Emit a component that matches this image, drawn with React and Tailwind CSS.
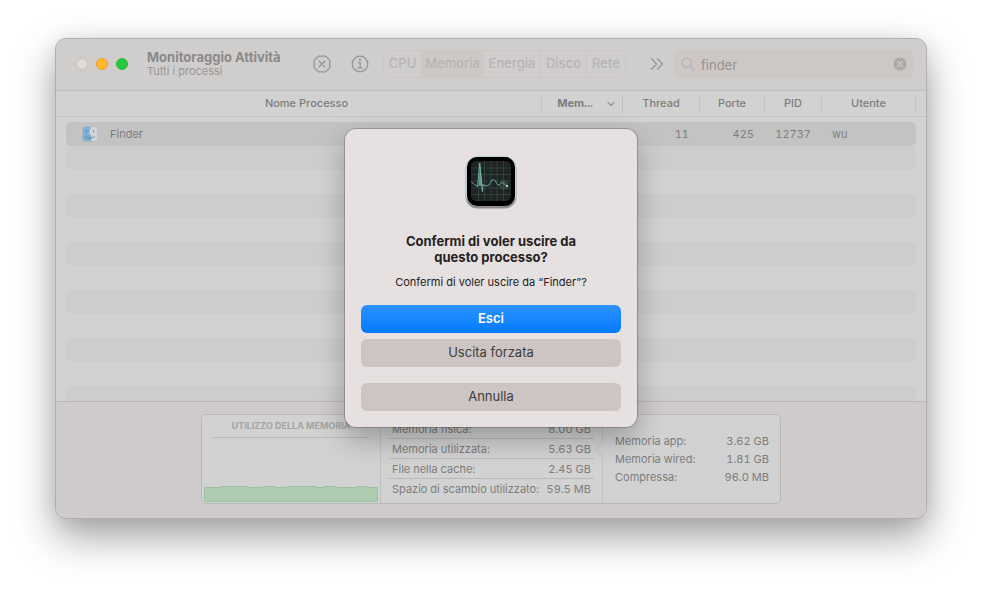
import React from "react";

const tabs = ["CPU", "Memoria", "Energia", "Disco", "Rete"];

const tabStyles = {
  CPU: "w-[37px]",
  Memoria: "w-[63px] rounded-md bg-[#cdc8c5]",
  Energia: "w-[57px] border-r border-[#c9c6c5]",
  Disco: "w-[46px] border-r border-[#c9c6c5]",
  Rete: "w-[38px]",
};

const usage = [
  { label: "Memoria fisica:", value: "8.00 GB" },
  { label: "Memoria utilizzata:", value: "5.63 GB" },
  { label: "File nella cache:", value: "2.45 GB" },
  { label: "Spazio di scambio utilizzato:", value: "59.5 MB" },
];

const breakdown = [
  { label: "Memoria app:", value: "3.62 GB" },
  { label: "Memoria wired:", value: "1.81 GB" },
  { label: "Compressa:", value: "96.0 MB" },
];

const emptyRows = Array.from({ length: 11 }, (_, i) => i);

export default function App() {
  return (
    <div className="min-h-screen bg-white px-[55px] pt-[38px] pb-[74px] font-['Inter','Liberation_Sans',sans-serif]">
      <main className="relative overflow-hidden rounded-[11px] border border-[#b0aeae] bg-[#d2d2d2] shadow-[0_18px_40px_rgba(0,0,0,0.36),0_2px_20px_rgba(0,0,0,0.08)]">
        <Toolbar />
        <ProcessTable />
        <MemoryFooter />
        <QuitDialog />
      </main>
    </div>
  );
}

const Toolbar = () => (
  <header className="flex h-[52px] items-center border-b border-[#bfbdbd] bg-[#d0cdcd] pr-3 pb-[2px] pl-5">
    <div className="flex gap-2">
      <button
        type="button"
        aria-label="Chiudi"
        className="size-3 rounded-full border border-[#c5bfbe] bg-[#e1dbda]"
      />
      <button
        type="button"
        aria-label="Riduci"
        className="size-3 rounded-full border border-[#e5a024] bg-[#ffb92a]"
      />
      <button
        type="button"
        aria-label="Ingrandisci"
        className="size-3 rounded-full border border-[#27bc38] bg-[#29c73c]"
      />
    </div>

    <div className="ml-[19px] w-[166px]">
      <h1 className="text-[13px] leading-4 font-bold text-[#8b8989]">
        Monitoraggio Attività
      </h1>
      <p className="text-[11px] leading-[13px] text-[#989696]">
        Tutti i processi
      </p>
    </div>

    <button type="button" aria-label="Interrompi processo">
      <svg
        viewBox="0 0 18 18"
        className="size-[18px] fill-none stroke-[#969494] stroke-[1.3]"
        strokeLinecap="round"
        strokeLinejoin="round"
      >
        <path d="M5.8 1.2h6.4q.5 0 .9.4l3.3 3.3q.4.4.4.9v6.4q0 .5-.4.9l-3.3 3.3q-.4.4-.9.4H5.8q-.5 0-.9-.4l-3.3-3.3q-.4-.4-.4-.9V5.8q0-.5.4-.9l3.3-3.3q.4-.4.9-.4z" />
        <path d="M6.200 6.200l5.600 5.600M11.800 6.200l-5.600 5.600" />
      </svg>
    </button>

    <button type="button" aria-label="Informazioni" className="ml-5">
      <svg
        viewBox="0 0 18 18"
        className="size-[18px] fill-none stroke-[#969494] stroke-[1.3]"
        strokeLinecap="round"
      >
        <circle cx="9" cy="9" r="7.8" />
        <path d="M7.4 7.7h1.8v5M7 12.8h4.2" />
        <circle cx="8.9" cy="5" r="0.5" className="fill-[#969494]" />
      </svg>
    </button>

    <div className="ml-[14px] flex h-7 shrink-0 items-center rounded-md border border-[#cac7c6]">
      {tabs.map((tab) => (
        <button
          key={tab}
          type="button"
          aria-pressed={tab === "Memoria"}
          className={`flex h-[27px] items-center justify-center text-[13px] font-medium text-[#b7b4b4] ${tabStyles[tab]}`}
        >
          {tab}
        </button>
      ))}
    </div>

    <button type="button" aria-label="Altro" className="ml-6">
      <svg
        viewBox="0 0 14 14"
        className="size-[14px] fill-none stroke-[#969494] stroke-[1.3]"
        strokeLinecap="round"
        strokeLinejoin="round"
      >
        <path d="M1.5 1.7L6.7 7l-5.2 5.3M7.3 1.7L12.5 7l-5.2 5.3" />
      </svg>
    </button>

    <div className="ml-[10px] flex h-7 min-w-0 flex-1 items-center rounded-md bg-[#cdc8c6] px-[7px]">
      <svg
        viewBox="0 0 14 14"
        className="size-[14px] shrink-0 fill-none stroke-[#b3b0af] stroke-[1.2]"
        strokeLinecap="round"
      >
        <circle cx="5.8" cy="5.8" r="4.8" />
        <path d="M9.4 9.4l3.6 3.6" />
      </svg>
      <input
        type="text"
        aria-label="Cerca"
        defaultValue="finder"
        className="ml-[6px] min-w-0 flex-1 bg-transparent pt-1 text-[13px] text-[#959291] outline-none"
      />
      <button type="button" aria-label="Cancella ricerca">
        <svg viewBox="0 0 14 14" className="size-[14px]">
          <circle cx="7" cy="7" r="6.6" className="fill-[#adabaa]" />
          <path
            d="M4.7 4.7l4.6 4.6M9.3 4.7L4.7 9.3"
            className="stroke-[#d0cccb] stroke-[1.2]"
            strokeLinecap="round"
          />
        </svg>
      </button>
    </div>
  </header>
);

const ProcessTable = () => (
  <div className="h-[310px] overflow-hidden">
    <table className="w-full table-fixed border-separate border-spacing-0 text-[11px] text-[#7d7d7d] tabular-nums">
      <thead>
        <tr>
          <HeaderCell label="Nome Processo" className="pl-4" />
          <HeaderCell label="Mem..." className="w-[81px]" sorted />
          <HeaderCell label="Thread" className="w-[77px]" />
          <HeaderCell label="Porte" className="w-[65px]" />
          <HeaderCell label="PID" className="w-[57px]" />
          <HeaderCell label="Utente" className="w-[104px] pr-[10px]" />
        </tr>
      </thead>

      <tbody>
        <tr>
          <td className="pt-[5px] pl-[10px]">
            <div className="flex h-6 items-center gap-3 rounded-l-[5px] bg-[#c3c3c3] pl-4">
              <FinderIcon />
              Finder
            </div>
          </td>
          <td className="pt-[5px]">
            <div className="h-6 bg-[#c3c3c3]" />
          </td>
          <td className="pt-[5px]">
            <div className="h-6 bg-[#c3c3c3] pr-[11px] text-right leading-6">11</div>
          </td>
          <td className="pt-[5px]">
            <div className="h-6 bg-[#c3c3c3] pr-[11px] text-right leading-6">425</div>
          </td>
          <td className="pt-[5px]">
            <div className="h-6 bg-[#c3c3c3] pr-[11px] text-right leading-6">12737</div>
          </td>
          <td className="pt-[5px] pr-[10px]">
            <div className="h-6 rounded-r-[5px] bg-[#c3c3c3] pl-[10px] leading-6">wu</div>
          </td>
        </tr>

        {emptyRows.map((i) => (
          <tr key={i}>
            <td colSpan={6} className="pr-[10px] pl-[10px]">
              <div
                className={`h-6 rounded-[5px] ${i % 2 === 0 ? "bg-[#cdcdcd]" : ""}`}
              />
            </td>
          </tr>
        ))}
      </tbody>
    </table>
  </div>
);

const HeaderCell = ({ label, className, sorted }) => (
  <th
    scope="col"
    aria-sort={sorted ? "descending" : undefined}
    className={`h-[26px] border-b border-[#c4c4c4] ${className}`}
  >
    <div
      className={`flex h-4 items-center justify-center border-r border-[#c2c2c2] ${
        sorted ? "gap-[14px] pl-2 font-bold" : "font-medium"
      }`}
    >
      {label}
      {sorted && (
        <svg
          viewBox="0 0 8 8"
          className="size-2 fill-none stroke-[#999999] stroke-[1.2]"
          strokeLinecap="round"
          strokeLinejoin="round"
        >
          <path d="M1 2.5l3 3 3-3" />
        </svg>
      )}
    </div>
  </th>
);

const FinderIcon = () => (
  <svg viewBox="0 0 16 16" className="size-4">
    <rect x="0.5" y="0.5" width="15" height="15" rx="3.5" className="fill-[#d2d4d5]" />
    <path
      d="M4 .5h5C8 3 7.500 5.500 7.400 8.500h1.800c0 2.500.1 4.800.5 7H4A3.500 3.500 0 0 1 .5 12V4A3.500 3.500 0 0 1 4 .5z"
      className="fill-[#7cb0d8]"
    />
    <rect
      x="0.5"
      y="0.5"
      width="15"
      height="15"
      rx="3.5"
      className="fill-none stroke-[#b4b8bb] stroke-[0.5]"
    />
    <path
      d="M4.500 4.700v1.200M11.500 4.700v1.200M3.600 10.500c2.600 2.200 6.200 2.200 8.800 0"
      className="fill-none stroke-[#66798a] stroke-[0.9]"
      strokeLinecap="round"
    />
  </svg>
);

const MemoryFooter = () => (
  <footer className="flex justify-center border-t border-[#b9b7b7] bg-[#cfcbca] pt-3 pb-[14px] text-[11px] text-[#7d7d7d]">
    <div className="flex h-[90px] w-[580px] rounded-[5px] border border-[#b8b8b8] bg-[#d2d2d2]">
      <section className="flex w-[179px] shrink-0 flex-col justify-between border-r border-[#c0c0c0] px-[2px] pb-px">
        <h2 className="mx-[9px] border-b border-[#b9b9b9] pt-1 pb-1 text-center text-[9px] leading-[14px] font-bold whitespace-nowrap text-[#a4a4a4]">
          UTILIZZO DELLA MEMORIA
        </h2>
        <svg viewBox="0 0 174 16" className="h-4 w-full" preserveAspectRatio="none">
          <path
            d="M.5 15.500V1.500H15L17 .5H43L46 1.500H57L60 .5H70L73 1.500H81L84 .5H111L114 1.500H118L121 .5H131L134 1.500H151L154 .5H162L165 1.500H173.500V15.500z"
            className="fill-[#aecbaf] stroke-[#9cc3a0]"
          />
        </svg>
      </section>

      <dl className="w-[222px] shrink-0 pt-[4px] pr-[9px] pl-2 tabular-nums">
        {usage.map((item, index) => (
          <div
            key={item.label}
            className={`flex h-5 justify-between border-b px-[3px] leading-5 whitespace-nowrap ${
              index === usage.length - 1 ? "border-transparent" : "border-[#b9b9b9]"
            }`}
          >
            <dt>{item.label}</dt>
            <dd>{item.value}</dd>
          </div>
        ))}
      </dl>

      {/* divider with the notch that points at the used memory row */}
      <svg
        viewBox="0 0 8 88"
        className="-ml-2 h-[88px] w-2 shrink-0 fill-none stroke-[#c0c0c0]"
      >
        <path d="M7.500 0V27L.7 34.500 7.500 42V88" />
      </svg>

      <dl className="flex-1 pt-[17px] pr-[11px] pl-3 tabular-nums">
        {breakdown.map((item) => (
          <div
            key={item.label}
            className="flex h-[18px] justify-between leading-[18px] whitespace-nowrap"
          >
            <dt>{item.label}</dt>
            <dd>{item.value}</dd>
          </div>
        ))}
      </dl>
    </div>
  </footer>
);

const QuitDialog = () => (
  <div
    role="alertdialog"
    aria-labelledby="dialog-title"
    aria-describedby="dialog-text"
    className="absolute top-[90px] left-1/2 flex w-[292px] -translate-x-1/2 flex-col items-center rounded-[11px] bg-[#e6e0e0] px-4 pt-[26px] pb-4 shadow-[0_0_0_1px_rgba(0,0,0,0.2),0_12px_28px_rgba(0,0,0,0.28)]"
  >
    <ActivityIcon />

    <h2
      id="dialog-title"
      className="mt-6 w-[200px] text-center text-[13px] leading-4 font-bold text-[#242222]"
    >
      Confermi di voler uscire da questo processo?
    </h2>
    <p
      id="dialog-text"
      className="mt-[10px] text-[11px] leading-[14px] whitespace-nowrap text-[#242222]"
    >
      Confermi di voler uscire da “Finder”?
    </p>

    <button
      type="button"
      className="mt-4 h-7 w-full rounded-md bg-linear-to-b from-[#2a93ff] to-[#0079ff] text-[13px] font-semibold text-white"
    >
      Esci
    </button>
    <button
      type="button"
      className="mt-[6px] h-7 w-full rounded-md bg-[#cdc5c4] text-[13px] text-[#3d3d3b]"
    >
      Uscita forzata
    </button>
    <button
      type="button"
      className="mt-4 h-7 w-full rounded-md bg-[#cdc5c4] text-[13px] text-[#3d3d3b]"
    >
      Annulla
    </button>
  </div>
);

const ActivityIcon = () => (
  <svg viewBox="0 0 54 54" className="size-[54px]">
    <rect x="1.500" y="2.500" width="51" height="51" rx="12" className="fill-[#8f8b8b]" />
    <rect x="1.500" y="1" width="51" height="50" rx="12" className="fill-[#bfd3da]" />
    <rect x="3" y="2" width="48" height="49" rx="10" className="fill-black" />
    <rect x="7" y="6" width="40" height="40" rx="5" className="fill-[#202423]" />
    <path
      d="M14.500 6v40M20.500 6v40M27 6v40M33 6v40M39.500 6v40M7 13h40M7 19.500h40M7 26h40M7 33h40M7 39.500h40"
      className="fill-none stroke-[#37564f] stroke-[0.6]"
    />
    <path d="M14.500 31L16 8l2.500 23z" className="fill-[#5f938a]" />
    <path
      d="M7 26.500l2.500 2.500 4 2.500L15.800 8l2.500 28.500.7-7 3 1.500 3-1c2-3 2.500-5.500 4.500-5.500s2.500 4 4.500 5.500c2 .8 2.500-2.500 4.500-2.500s2 3 4.500 3.500"
      className="fill-none stroke-[#7cc4b8] stroke-[0.8]"
      strokeLinejoin="round"
    />
    <circle cx="40" cy="30" r="5" className="fill-[#7cc4b8]" opacity="0.15" />
    <circle cx="43" cy="31" r="0.900" className="fill-[#e6fbf7]" />
  </svg>
);
